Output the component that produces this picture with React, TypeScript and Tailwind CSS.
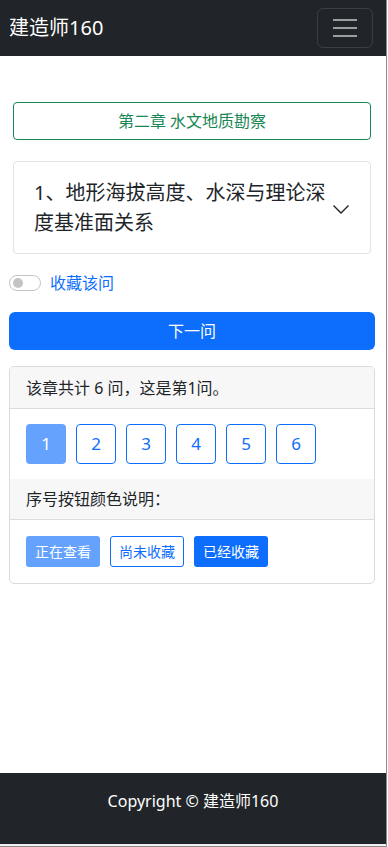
import React from "react";

const font = { fontFamily: '"Noto Sans", "Noto Sans CJK SC", sans-serif' };

export default function App() {
  const nums = [1, 2, 3, 4, 5, 6];
  return (
    <div className="w-[388px] min-h-[847px] bg-white flex" style={font}>
      <div className="w-[387px] min-h-[847px] flex flex-col border-r border-[#8a8a8a]">
        <nav className="h-[56px] bg-[#212529] flex items-center justify-between pl-[9px] pr-[13px] shrink-0">
          <span className="text-white text-[20px] leading-none">建造师160</span>
          <button className="w-[56px] h-[40px] rounded-[6px] border border-[#3a3e43] flex items-center justify-center">
            <svg width="26" height="20" viewBox="0 0 26 20">
              <path d="M1 2h24M1 10h24M1 18h24" stroke="#9c9d9f" strokeWidth="2.2" />
            </svg>
          </button>
        </nav>

        <main className="flex-1 pl-[9px] pr-[11px] pt-[46px]">
          <div className="mx-[4px] h-[38px] rounded-[4px] border border-[#198754] flex items-center justify-center text-[#198754] text-[16px]">
            第二章 水文地质勘察
          </div>

          <div className="mx-[4px] mt-[21px] h-[93px] rounded-[4px] border border-[#e0e2e5] flex items-center pl-[20px] pr-[20px]">
            <div className="flex-1 text-[20px] leading-[30px] text-[#212529] pr-[4px]">
              1、地形海拔高度、水深与理论深度基准面关系
            </div>
            <svg width="18" height="12" viewBox="0 0 18 12" className="shrink-0 mt-[2px] -ml-[2px]">
              <path d="M1.5 2.5l7.5 7.5 7.5-7.5" fill="none" stroke="#212529" strokeWidth="1.4" />
            </svg>
          </div>

          <div className="mt-[20px] flex items-center h-[18px]">
            <div className="w-[32px] h-[16px] rounded-full border border-[#c4c4c4] flex items-center pl-[3px]">
              <div className="w-[10px] h-[10px] rounded-full bg-[#c4c4c4]" />
            </div>
            <span className="ml-[9px] text-[#0d6efd] text-[16px] leading-none">收藏该问</span>
          </div>

          <button className="mt-[20px] w-full h-[38px] rounded-[6px] bg-[#0d6efd] text-white text-[16px] flex items-center justify-center">
            下一问
          </button>

          <div className="mt-[16px] rounded-[5px] border border-[#dcdcdc] overflow-hidden">
            <div className="h-[42px] bg-[#f7f7f7] border-b border-[#dcdcdc] flex items-center pl-[16px] text-[16px] text-[#212529]">
              该章共计 6 问，这是第1问。
            </div>
            <div className="px-[16px] py-[15px] flex gap-[10px]">
              {nums.map((n) =>
                n === 1 ? (
                  <div key={n} className="w-[40px] h-[40px] rounded-[4px] bg-[#64a2fe] text-white text-[17px] flex items-center justify-center">
                    {n}
                  </div>
                ) : (
                  <div key={n} className="w-[40px] h-[40px] rounded-[4px] border border-[#0d6efd] text-[#0d6efd] text-[17px] flex items-center justify-center">
                    {n}
                  </div>
                )
              )}
            </div>
            <div className="h-[41px] bg-[#f7f7f7] border-b border-[#dcdcdc] flex items-center pl-[16px] text-[16px] text-[#212529]">
              序号按钮颜色说明：
            </div>
            <div className="px-[16px] pt-[16px] pb-[16px] flex gap-[10px]">
              <div className="w-[74px] h-[31px] rounded-[3px] bg-[#64a2fe] text-white text-[14px] flex items-center justify-center">正在查看</div>
              <div className="w-[74px] h-[31px] rounded-[3px] border border-[#0d6efd] text-[#0d6efd] text-[14px] flex items-center justify-center">尚未收藏</div>
              <div className="w-[74px] h-[31px] rounded-[3px] bg-[#0d6efd] text-white text-[14px] flex items-center justify-center">已经收藏</div>
            </div>
          </div>
        </main>

        <footer className="h-[71px] bg-[#212529] flex justify-center pt-[16px] text-white text-[16px] leading-[24px] shrink-0">
          Copyright © 建造师160
        </footer>
        <div className="h-[3px] bg-[#eef0f2] border-b border-[#8a8a8a] shrink-0" />
      </div>
    </div>
  );
}
